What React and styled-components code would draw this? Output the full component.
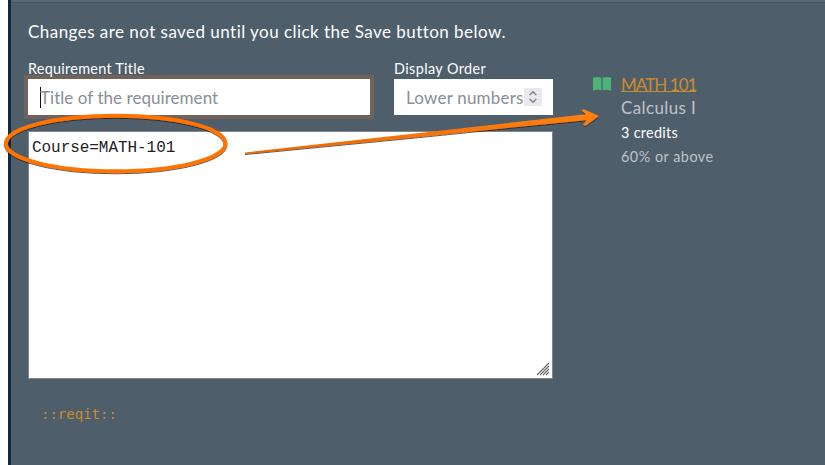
import React from 'react';
import styled, { createGlobalStyle } from 'styled-components';

const GlobalStyle = createGlobalStyle`
  * { box-sizing: border-box; }
  body { margin: 0; background: #fff; font-family: Lato, sans-serif; color: #fff; overflow: hidden; }
`;

const Page = styled.div`
  position: relative;
  width: 825px;
  height: 465px;
  padding-left: 8px;
  overflow: hidden;
`;

const Panel = styled.main`
  height: 465px;
  border-left: 3px solid #0f2c3f;
  background: #4f5e6b;
`;

const TopStrip = styled.div`
  height: 3px;
  background: #586774;
  border-bottom: 1px solid #465361;
`;

const Columns = styled.div`
  display: grid;
  grid-template-columns: 525px 1fr;
  column-gap: 40px;
  padding: 17px 0 0 17px;
`;

const Text = styled.span`
  display: block;
  white-space: pre;
  font-size: ${(p) => p.$size}px;
  line-height: ${(p) => p.$line}px;
  letter-spacing: ${(p) => p.$spacing || 0}px;
  color: ${(p) => p.$color || '#fff'};
`;

const Fields = styled.div`
  display: flex;
  justify-content: space-between;
  margin-top: 16px;
`;

const Field = styled.label`
  display: block;
  width: ${(p) => p.$width}px;
`;

const InputBox = styled.div`
  display: flex;
  align-items: center;
  height: 36px;
  margin-top: 1px;
  padding: 1px 12px 0;
  background: #fff;
  box-shadow: ${(p) => (p.$focused ? '0 0 0 4px #72625a' : 'none')};
`;

const Caret = styled.span`
  width: 1px;
  height: 21px;
  margin-right: -1px;
  background: #111;
`;

const Stepper = styled.span`
  display: grid;
  place-items: center;
  flex: none;
  width: 18px;
  height: 18px;
  margin-left: auto;
  margin-top: -2px;
  background: #e9e8ed;
`;

const Editor = styled.div`
  display: flex;
  flex-direction: column;
  justify-content: space-between;
  height: 248px;
  margin-top: 16px;
  padding: 6px 2px 2px 3px;
  border: 1px solid #858590;
  border-radius: 1px;
  background: #fff;
`;

const Code = styled.code`
  font: 16px/20px "Liberation Mono", monospace;
  letter-spacing: -0.05px;
  color: #222;
`;

const Grip = styled.svg`
  align-self: flex-end;
`;

const Tag = styled.code`
  display: block;
  margin: 26px 0 0 13px;
  font: 14px/18px "DejaVu Sans Mono", monospace;
  color: #cc8b2c;
`;

const Course = styled.section`
  display: grid;
  grid-template-columns: 28px 1fr;
  padding-top: 52px;
`;

const BookIcon = styled.svg`
  margin-top: 5px;
`;

const CourseLink = styled.div`
  width: 75px;
  height: 20px;
  margin-bottom: 4px;
  border-bottom: 1px solid #cc8b2c;
`;

const Annotations = styled.svg`
  position: absolute;
  inset: 0;
  pointer-events: none;
`;

export default function App() {
  return (
    <Page>
      <GlobalStyle />
      <Panel>
        <TopStrip />
        <Columns>
          <div>
            <Text $size={17} $line={24} $spacing={0.46}>Changes are not saved until you click the Save button below.</Text>
            <Fields>
              <Field $width={342}>
                <Text $size={14.4} $line={18} $spacing={0.28}>Requirement Title</Text>
                <InputBox $focused>
                  <Caret />
                  <Text $size={17} $line={24} $spacing={0.05} $color="#879097">Title of the requirement</Text>
                </InputBox>
              </Field>
              <Field $width={159}>
                <Text $size={14.4} $line={18} $spacing={0.4}>Display Order</Text>
                <InputBox>
                  <Text $size={17} $line={24} $spacing={0.2} $color="#879097">Lower numbers</Text>
                  <Stepper>
                    <svg width="10" height="14" viewBox="0 0 10 14" fill="none" stroke="#85858e" strokeWidth="1.5">
                      <path d="M1.7 5 5 1.8 8.3 5M1.7 9 5 12.2 8.3 9" />
                    </svg>
                  </Stepper>
                </InputBox>
              </Field>
            </Fields>
            <Editor>
              <Code>Course=MATH-101</Code>
              <Grip width="14" height="14" viewBox="0 0 14 14" stroke="#666" strokeWidth="1.1">
                <path d="M1 13 13 1M4 13 13 4M7 13 13 7M10 13 13 10" />
              </Grip>
            </Editor>
            <Tag>::reqit::</Tag>
          </div>
          <Course>
            <BookIcon width="18" height="14" viewBox="0 0 18 14" fill="#4db377">
              <path d="M0 .8Q4.8-.8 8.4.8V13.2Q4.5 12 0 13.8ZM9.6.8Q13.2-.8 18 .8V13.8Q13.5 12 9.6 13.2Z" />
            </BookIcon>
            <div>
              <CourseLink>
                <Text $size={17} $line={25} $spacing={-0.95} $color="#cc8b2c">MATH 101</Text>
              </CourseLink>
              <Text $size={17} $line={24} $spacing={0.38} $color="#bfc2c8">Calculus I</Text>
              <Text $size={14.4} $line={25} $spacing={0.3}>3 credits</Text>
              <Text $size={14.4} $line={24} $spacing={0.5} $color="#bfc2c8">60% or above</Text>
            </div>
          </Course>
        </Columns>
      </Panel>
      <Annotations width="825" height="465" viewBox="0 0 825 465">
        <defs>
          <linearGradient id="arrow" x1="0" y1="0" x2="0" y2="1">
            <stop offset="0" stopColor="#ff8412" />
            <stop offset="1" stopColor="#ee6800" />
          </linearGradient>
          <filter id="shade" x="-10%" y="-20%" width="120%" height="150%">
            <feDropShadow dx="0" dy="1" stdDeviation="0.5" floodColor="#111" floodOpacity="0.7" />
          </filter>
        </defs>
        <g filter="url(#shade)">
          <ellipse cx="115.7" cy="143.5" rx="109.8" ry="27.7" fill="none" stroke="#ff7300" strokeWidth="4" />
          <path d="M245 152.5 415 133.4 586 114.3 581.5 110.5Q583 108.8 585.5 110L599 116 586.5 125.3Q584 126.5 583 124.5L586.5 120.2 415 137.4 245 154Z" fill="url(#arrow)" />
        </g>
      </Annotations>
    </Page>
  );
}
